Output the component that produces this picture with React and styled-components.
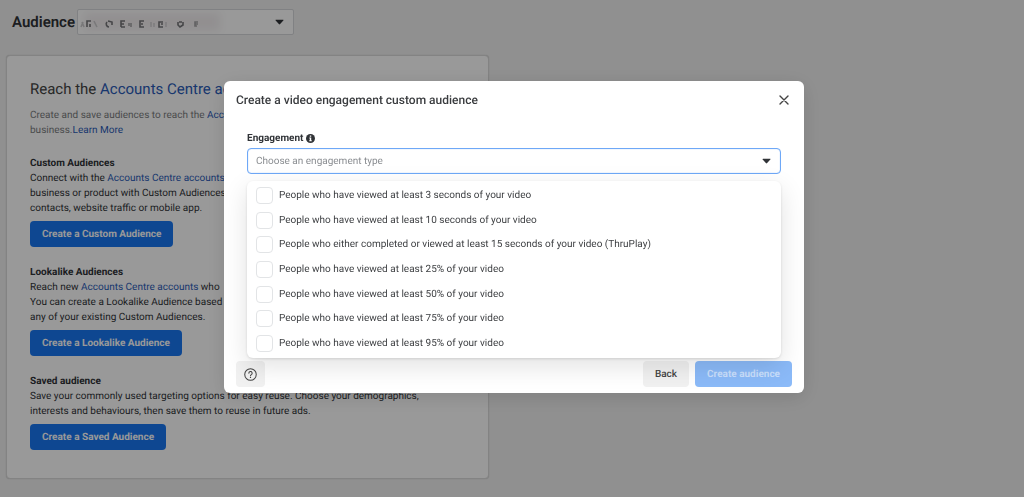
import React, {useState} from 'react';
import styled, {createGlobalStyle} from 'styled-components';

const engagementTypes = [
    'People who have viewed at least 3 seconds of your video',
    'People who have viewed at least 10 seconds of your video',
    'People who either completed or viewed at least 15 seconds of your video (ThruPlay)',
    'People who have viewed at least 25% of your video',
    'People who have viewed at least 50% of your video',
    'People who have viewed at least 75% of your video',
    'People who have viewed at least 95% of your video',
];

const Caret = () => (
    <CaretIcon viewBox="0 0 10 6" width="9" height="6" aria-hidden="true">
        <path d="M1.2 0.4h7.6c.6 0 .9.6.5 1L5.7 5.3a1 1 0 0 1-1.4 0L.7 1.4C.3 1 .6.4 1.2.4z" fill="currentColor" />
    </CaretIcon>
);

// account name is hidden, only traces of the letters stay visible
const HiddenName = () => (
    <HiddenNameDrawing viewBox="0 0 150 24" width="150" height="24" aria-hidden="true">
        <defs>
            <filter id="smear" x="-20%" y="-50%" width="140%" height="200%">
                <feGaussianBlur stdDeviation="4" />
            </filter>
            <filter id="soften" x="-5%" y="-20%" width="110%" height="140%">
                <feGaussianBlur stdDeviation="0.7" />
            </filter>
        </defs>
        <rect x="6" y="3" width="136" height="18" fill="#f3eff1" filter="url(#smear)" />
        <g fill="none" stroke="#55565a" strokeWidth="1.6" filter="url(#soften)">
            <path d="M4 12l2 5M3 17l2-5" opacity="0.3" />
            <path d="M9 17v-6h4M12 14v3" opacity="0.8" />
            <path d="M16 11l3 6" opacity="0.25" />
            <path d="M29 12a3 3 0 0 0 2 5M30 11l4 1v3" opacity="0.8" />
            <path d="M43 17v-6h4M43 14h3M43 17h4" opacity="0.8" />
            <path d="M51 13v3M53 13v4" opacity="0.5" />
            <path d="M66 11h-4v6h4M63 14h2" opacity="0.8" />
            <path d="M73 12v5M76 13v4" opacity="0.2" />
            <path d="M85 12h-4v5h4M83 14h2" opacity="0.8" />
            <path d="M88 12v5" opacity="0.2" />
            <path d="M100 12v3l2 2 3-2v-3M101 12h3" opacity="0.8" />
            <path d="M120 12h-3v4h2M117 14h3" opacity="0.5" />
        </g>
    </HiddenNameDrawing>
);

// eslint-disable-next-line react/prop-types
const AudienceSection = ({title, action, children}) => (
    <Section>
        <SectionTitle>{title}</SectionTitle>
        <SectionText>{children}</SectionText>
        <Button type="button" $variant="primary">{action}</Button>
    </Section>
);

const App = () => {
    const [selected, setSelected] = useState([]);

    const toggle = (type) => {
        setSelected(selected.includes(type) ? selected.filter((s) => s !== type) : [...selected, type]);
    };

    return (
        <>
            <GlobalStyle />
            <Page>
                <PageHeader>
                    <PageTitle htmlFor="account">Audience</PageTitle>
                    <AccountPicker>
                        <AccountSelect id="account">
                            <option value="" aria-label="Hidden account" />
                        </AccountSelect>
                        <HiddenName />
                        <Caret />
                    </AccountPicker>
                </PageHeader>
                <Card>
                    <CardTitle>Reach the <CardLink href="#">Accounts Centre accounts</CardLink></CardTitle>
                    <CardIntro>
                        Create and save audiences to reach the <CardLink href="#">Accounts</CardLink><br />
                        business.<CardLink href="#">Learn More</CardLink>
                    </CardIntro>
                    <AudienceSection title="Custom Audiences" action="Create a Custom Audience">
                        Connect with the <CardLink href="#">Accounts Centre accounts</CardLink><br />
                        business or product with Custom Audiences.<br />
                        contacts, website traffic or mobile app.
                    </AudienceSection>
                    <AudienceSection title="Lookalike Audiences" action="Create a Lookalike Audience">
                        Reach new <CardLink href="#">Accounts Centre accounts</CardLink> who<br />
                        You can create a Lookalike Audience based<br />
                        any of your existing Custom Audiences.
                    </AudienceSection>
                    <AudienceSection title="Saved audience" action="Create a Saved Audience">
                        Save your commonly used targeting options for easy reuse. Choose your demographics,<br />
                        interests and behaviours, then save them to reuse in future ads.
                    </AudienceSection>
                </Card>
            </Page>
            <Overlay>
                <Dialog role="dialog" aria-labelledby="dialog-title">
                    <DialogHeader>
                        <DialogTitle id="dialog-title">Create a video engagement custom audience</DialogTitle>
                        <CloseButton type="button" aria-label="Close">
                            <svg viewBox="0 0 10 10" width="10" height="10">
                                <path d="M1 1l8 8M9 1l-8 8" stroke="currentColor" strokeWidth="1.4" strokeLinecap="round" />
                            </svg>
                        </CloseButton>
                    </DialogHeader>
                    <DialogBody>
                        <FieldLabel htmlFor="engagement">
                            Engagement
                            <svg viewBox="0 0 10 10" width="9" height="9" aria-hidden="true">
                                <circle cx="5" cy="5" r="5" fill="currentColor" />
                                <path d="M4.2 1.7h1.6v1.4H4.2zM3.7 4h2.1v3h.6v1H3.6V7h.6V5h-.5z" fill="#fff" />
                            </svg>
                        </FieldLabel>
                        <Field>
                            <EngagementSelect id="engagement">
                                <option>Choose an engagement type</option>
                            </EngagementSelect>
                            <Caret />
                        </Field>
                        <Menu>
                            {
                                engagementTypes.map((type) => (
                                    <MenuItem key={type}>
                                        <Checkbox
                                            type="checkbox"
                                            checked={selected.includes(type)}
                                            onChange={() => toggle(type)}
                                        />
                                        {type}
                                    </MenuItem>
                                ))
                            }
                        </Menu>
                    </DialogBody>
                    <DialogFooter>
                        <HelpButton type="button" aria-label="Help">
                            <svg viewBox="0 0 14 14" width="13" height="13" fill="none" stroke="currentColor" strokeLinecap="round">
                                <circle cx="7" cy="7" r="6.2" strokeWidth="1.1" />
                                <path d="M5.2 5.6a1.8 1.8 0 1 1 2.7 1.5c-.6.4-.9.6-.9 1.2" strokeWidth="1.1" />
                                <circle cx="7" cy="10.2" r="0.7" fill="currentColor" stroke="none" />
                            </svg>
                        </HelpButton>
                        <Button type="button">Back</Button>
                        <Button type="button" $variant="pale">Create audience</Button>
                    </DialogFooter>
                </Dialog>
            </Overlay>
        </>
    );
};

const GlobalStyle = createGlobalStyle`
    * {
        box-sizing: border-box;
    }

    body {
        margin: 0;
        background-color: #f0f0f0;
        color: #303337;
        font-family: Roboto, "Liberation Sans", sans-serif;
        font-size: 10px;
        line-height: 15px;
        text-rendering: geometricPrecision;
    }

    button, input, select {
        margin: 0;
        font: inherit;
        text-rendering: inherit;
    }
`;

const Page = styled.main`
    padding: 9px 6px 18px;
`;

const PageHeader = styled.header`
    display: flex;
    align-items: center;
    gap: 2px;
    padding-left: 6px;
`;

const PageTitle = styled.label`
    font-size: 15px;
    font-weight: 600;
`;

const AccountPicker = styled.div`
    position: relative;
    width: 217px;
`;

const CaretIcon = styled.svg`
    position: absolute;
    top: 10px;
    right: 10px;
    pointer-events: none;
`;

const HiddenNameDrawing = styled.svg`
    position: absolute;
    top: 1px;
    left: 1px;
    pointer-events: none;
`;

const Select = styled.select`
    display: block;
    appearance: none;
    width: 100%;
    height: 26px;
    padding: 0 24px 0 8px;
    border: 1px solid #d5d7da;
    border-radius: 4px;
    outline: none;
    background-color: #fff;
`;

const AccountSelect = styled(Select)`
    border-radius: 2px;
`;

const EngagementSelect = styled(Select)`
    border-color: #6ea8f7;
    box-shadow: inset 0 0 1px #6ea8f7;
    color: #8a8d91;
`;

const Card = styled.section`
    max-width: 483px;
    margin-top: 20px;
    padding: 23px 23px 28px;
    border: 1px solid #dadada;
    border-radius: 4px;
    background-color: #fff;
    box-shadow: 0 0 1px #bbb;
    white-space: nowrap;
`;

const CardTitle = styled.h1`
    margin: 0;
    color: #444;
    font-size: 15px;
    font-weight: 400;
    line-height: 20px;
`;

const CardLink = styled.a`
    color: #2b5cb8;
    text-decoration: none;
`;

const CardIntro = styled.p`
    margin: 9px 0 0;
    color: #7b7d80;
`;

const Section = styled.section`
    margin-top: 18px;
`;

const SectionTitle = styled.h2`
    margin: 0;
    font-size: 10px;
    font-weight: 700;
`;

const SectionText = styled.p`
    margin: 0 0 5px;
`;

const buttonColors = {
    primary: {background: '#1877f2', text: '#fff'},
    pale: {background: '#8bbaf8', text: '#c9dffc'},
    plain: {background: '#f1f1f1', text: '#444'},
};

const Button = styled.button`
    display: block;
    height: 26px;
    padding: 0 12px;
    border: 0;
    border-radius: 4px;
    background-color: ${({$variant = 'plain'}) => buttonColors[$variant].background};
    color: ${({$variant = 'plain'}) => buttonColors[$variant].text};
    font-weight: ${({$variant}) => $variant ? 700 : 500};
`;

const Overlay = styled.div`
    position: fixed;
    inset: 0;
    display: flex;
    align-items: flex-start;
    justify-content: center;
    padding: 81px 0 0 4px;
    background-color: rgba(0, 0, 0, 0.4);
`;

const Dialog = styled.section`
    width: 580px;
    border-radius: 6px;
    background-color: #fff;
    box-shadow: 0 4px 20px rgba(0, 0, 0, 0.12);
`;

const DialogHeader = styled.header`
    display: flex;
    align-items: center;
    justify-content: space-between;
    padding: 11px 12px;
`;

const DialogTitle = styled.h2`
    margin: 0;
    color: #3a3c3f;
    font-size: 12px;
    font-weight: 500;
    line-height: 16px;
`;

const CloseButton = styled.button`
    display: flex;
    align-items: center;
    justify-content: center;
    width: 16px;
    height: 16px;
    padding: 0;
    border: 0;
    background: none;
    color: #444;
`;

const DialogBody = styled.div`
    padding: 12px 23px 0;
`;

const FieldLabel = styled.label`
    display: flex;
    align-items: center;
    gap: 3px;
    margin-bottom: 2px;
    font-weight: 700;
`;

const Field = styled.div`
    position: relative;
`;

const Menu = styled.div`
    position: relative;
    z-index: 1;
    display: flex;
    flex-direction: column;
    justify-content: space-between;
    min-height: 177px;
    margin-top: 7px;
    padding: 6px 9px;
    border-radius: 6px;
    background-color: #fff;
    box-shadow: 0 1px 3px rgba(0, 0, 0, 0.12), 0 8px 26px rgba(0, 0, 0, 0.12);
`;

const MenuItem = styled.label`
    display: flex;
    align-items: center;
    gap: 6px;
    color: #3f4144;
`;

const Checkbox = styled.input`
    appearance: none;
    width: 17px;
    height: 17px;
    border: 1px solid #e2e4e6;
    border-radius: 4px;
    background-color: ${({checked}) => checked ? '#1877f2' : '#fff'};
`;

const DialogFooter = styled.footer`
    display: flex;
    gap: 6px;
    padding: 3px 12px 6px;
`;

const HelpButton = styled(Button)`
    display: flex;
    align-items: center;
    justify-content: center;
    width: 29px;
    margin-right: auto;
    padding: 0;
`;

export default App;
